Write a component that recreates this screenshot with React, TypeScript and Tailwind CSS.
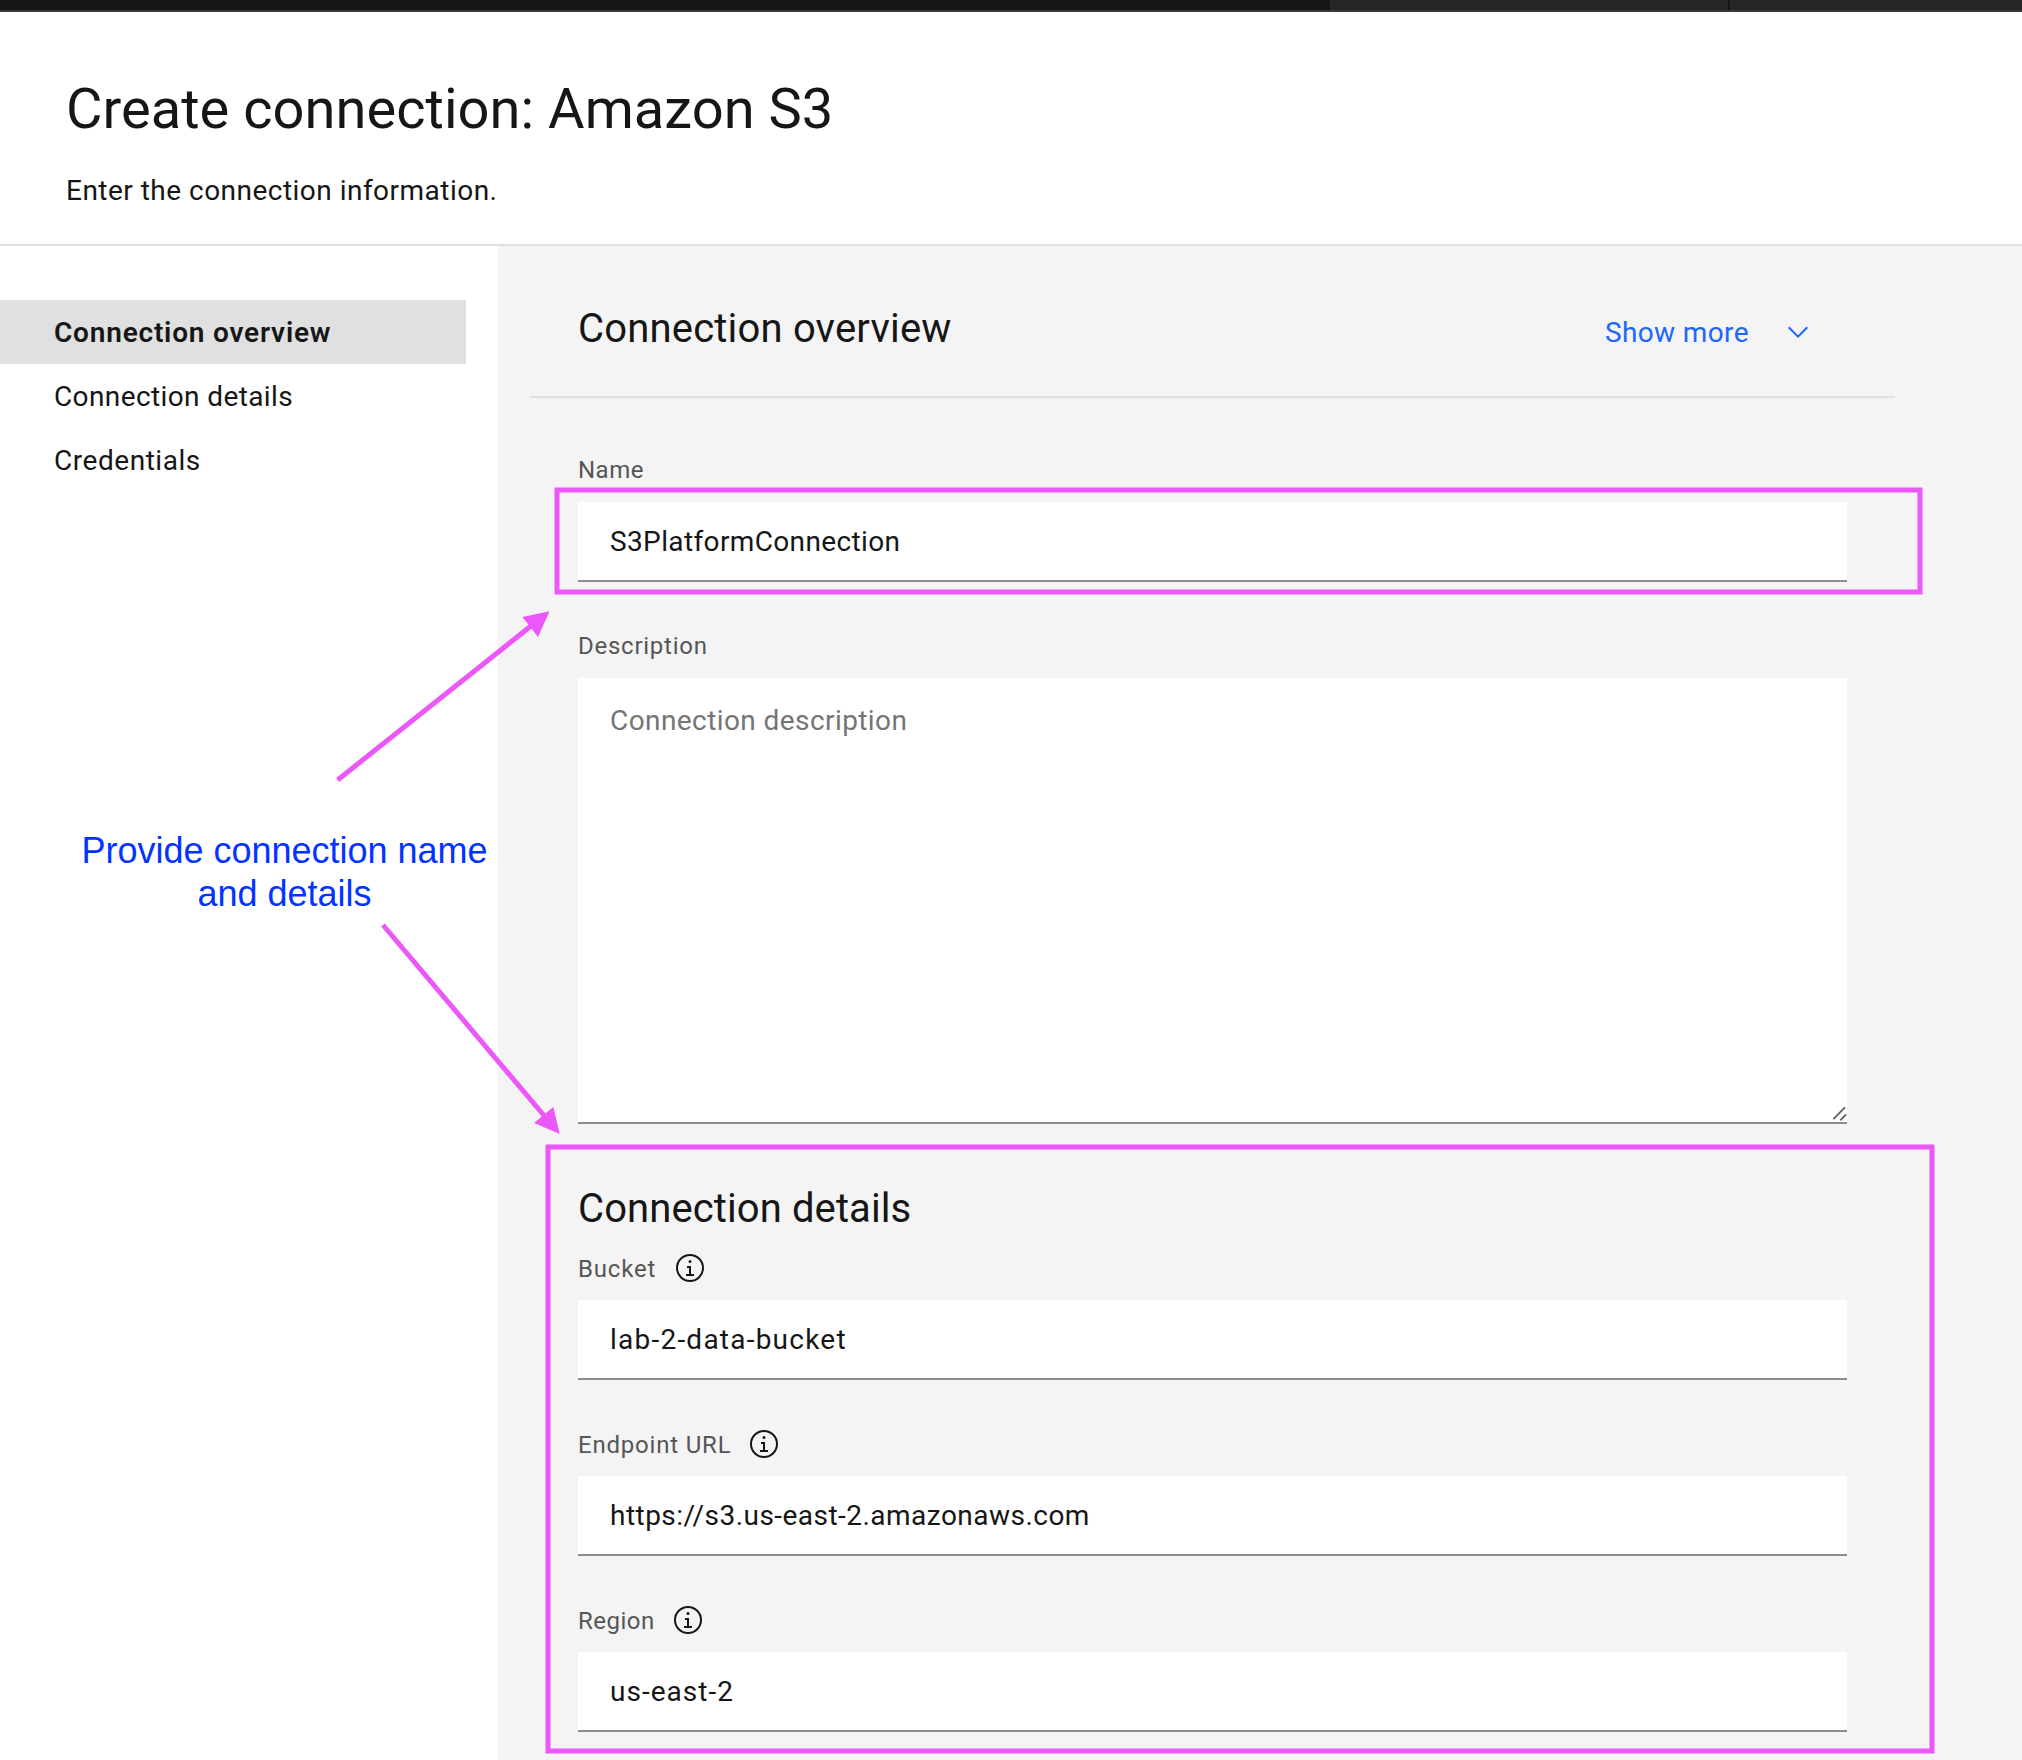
import React from "react";

const navItems = [
  { label: "Connection overview", active: true, spacing: "tracking-[0.8px]" },
  { label: "Connection details", active: false, spacing: "tracking-[0.39px]" },
  { label: "Credentials", active: false, spacing: "tracking-[0.54px]" },
];

const detailFields = [
  { label: "Bucket", labelClass: "w-24 tracking-[0.84px]", value: "lab-2-data-bucket", valueClass: "tracking-[1.23px]" },
  { label: "Endpoint URL", labelClass: "w-[170px] tracking-[0.8px]", value: "https://s3.us-east-2.amazonaws.com", valueClass: "tracking-[0.47px]" },
  { label: "Region", labelClass: "w-[94px] tracking-[0.5px]", value: "us-east-2", valueClass: "tracking-[1.02px]" },
];

function TopBar() {
  return (
    <div className="flex h-3 border-b-2 border-[#393939] bg-[#161616]">
      <div className="w-[1330px]" />
      <div className="w-[400px] border-r-2 border-[#161616] bg-[#262626]" />
      <div className="flex-1 bg-[#262626]" />
    </div>
  );
}

function InfoIcon() {
  return (
    <svg className="size-8 shrink-0" viewBox="0 0 32 32" fill="#161616">
      <path d="M17 22v-8h-4v2h2v6h-3v2h8v-2h-3zM16 8a1.5 1.5 0 1 0 1.5 1.5A1.5 1.5 0 0 0 16 8z" />
      <path d="M16 30a14 14 0 1 1 14-14 14 14 0 0 1-14 14zm0-26a12 12 0 1 0 12 12A12 12 0 0 0 16 4z" />
    </svg>
  );
}

function TextField({ value, className }: { value: string; className: string }) {
  return (
    <div className="h-20 border-b-2 border-[#8d8d8d] bg-white px-8">
      <div className={"text-[28px] leading-[79px] text-[#161616] " + className}>{value}</div>
    </div>
  );
}

function Annotations() {
  return (
    <>
      <svg className="pointer-events-none absolute inset-0 h-[1760px] w-[2022px]" viewBox="0 0 2022 1760" fill="none">
        <g stroke="#eb57f8" strokeWidth="5">
          <rect x="557" y="490" width="1363" height="102" />
          <rect x="548" y="1147" width="1384" height="604" />
          <path d="M337.6 780L531 626" />
          <path d="M383 925L544 1115.5" />
        </g>
        <g fill="#eb57f8">
          <path d="M549.6 611.3L522.4 617L538 637Z" />
          <path d="M559.7 1133.9L553.3 1107L534 1123Z" />
        </g>
      </svg>
      <p className="absolute left-[59px] top-[829px] w-[451px] text-center font-['Liberation_Sans',Arial,sans-serif] text-[36px] leading-[43px] text-[#0433ff]">
        Provide connection name
        <br />
        and details
      </p>
    </>
  );
}

export default function App() {
  return (
    <div className="relative flex h-[1760px] w-[2022px] flex-col overflow-hidden bg-white font-['Roboto',sans-serif] text-[#161616]">
      <TopBar />
      <header className="h-[234px] border-b-2 border-[#e0e0e0] pl-[66px] pt-[65px]">
        <h1 className="text-[56px] leading-[64px] tracking-[0.04px]">Create connection: Amazon S3</h1>
        <p className="mt-[31px] text-[28px] leading-[37px] tracking-[0.48px]">Enter the connection information.</p>
      </header>

      <div className="flex flex-1">
        <nav className="w-[498px] pt-[54px]">
          {navItems.map((item) => (
            <div
              key={item.label}
              className={
                "h-16 w-[466px] pl-[54px] text-[28px] leading-[65px] " +
                item.spacing +
                (item.active ? " bg-[#e0e0e0] font-semibold" : "")
              }
            >
              {item.label}
            </div>
          ))}
        </nav>

        <main className="flex-1 bg-[#f4f4f4] pl-8">
          <div className="flex h-[152px] w-[1365px] border-b-2 border-[#e0e0e0] pl-12 pr-[81px] pt-[59px]">
            <h2 className="flex-1 text-[40px] leading-[47px] tracking-[0.19px]">Connection overview</h2>
            <button className="flex h-8 items-start gap-[33px] pt-[11px] text-[#1c66fb]">
              <span className="w-[144px] text-left text-[28px] leading-[33px] tracking-[0.36px]">Show more</span>
              <svg className="size-8" viewBox="0 0 16 16" fill="currentColor">
                <path d="M8 11L3 6 3.7 5.3 8 9.6 12.3 5.3 13 6z" />
              </svg>
            </button>
          </div>

          <section className="ml-12 w-[1269px]">
            <div className="pt-[58px] text-[24px] leading-7 tracking-[0.5px] text-[#565656]">Name</div>
            <div className="mt-[18px]">
              <TextField value="S3PlatformConnection" className="tracking-[0.37px]" />
            </div>
            <div className="mt-[50px] text-[24px] leading-7 tracking-[0.74px] text-[#565656]">Description</div>
            <div className="relative mt-[18px] h-[446px] border-b-2 border-[#8d8d8d] bg-white px-8 pt-6">
              <div className="text-[28px] leading-[37px] tracking-[0.42px] text-[#757575]">Connection description</div>
              <svg className="absolute bottom-0 right-0 size-4" viewBox="0 0 16 16" fill="none" stroke="#5f5f5f" strokeWidth="1.8">
                <path d="M2.3 13.2L14 1.3M9.3 14.4L15.2 8.4" />
              </svg>
            </div>
          </section>

          <section className="ml-12 w-[1269px]">
            <h2 className="mt-[61px] text-[40px] leading-[47px] tracking-[0.1px]">Connection details</h2>
            <div className="mt-5 flex flex-col gap-12">
              {detailFields.map((field) => (
                <div key={field.label} className="flex flex-col gap-4">
                  <div className="flex h-8 items-center">
                    <span className={"pt-0.5 text-[24px] leading-7 text-[#565656] " + field.labelClass}>{field.label}</span>
                    <InfoIcon />
                  </div>
                  <TextField value={field.value} className={field.valueClass} />
                </div>
              ))}
            </div>
          </section>
        </main>
      </div>
      <Annotations />
    </div>
  );
}
